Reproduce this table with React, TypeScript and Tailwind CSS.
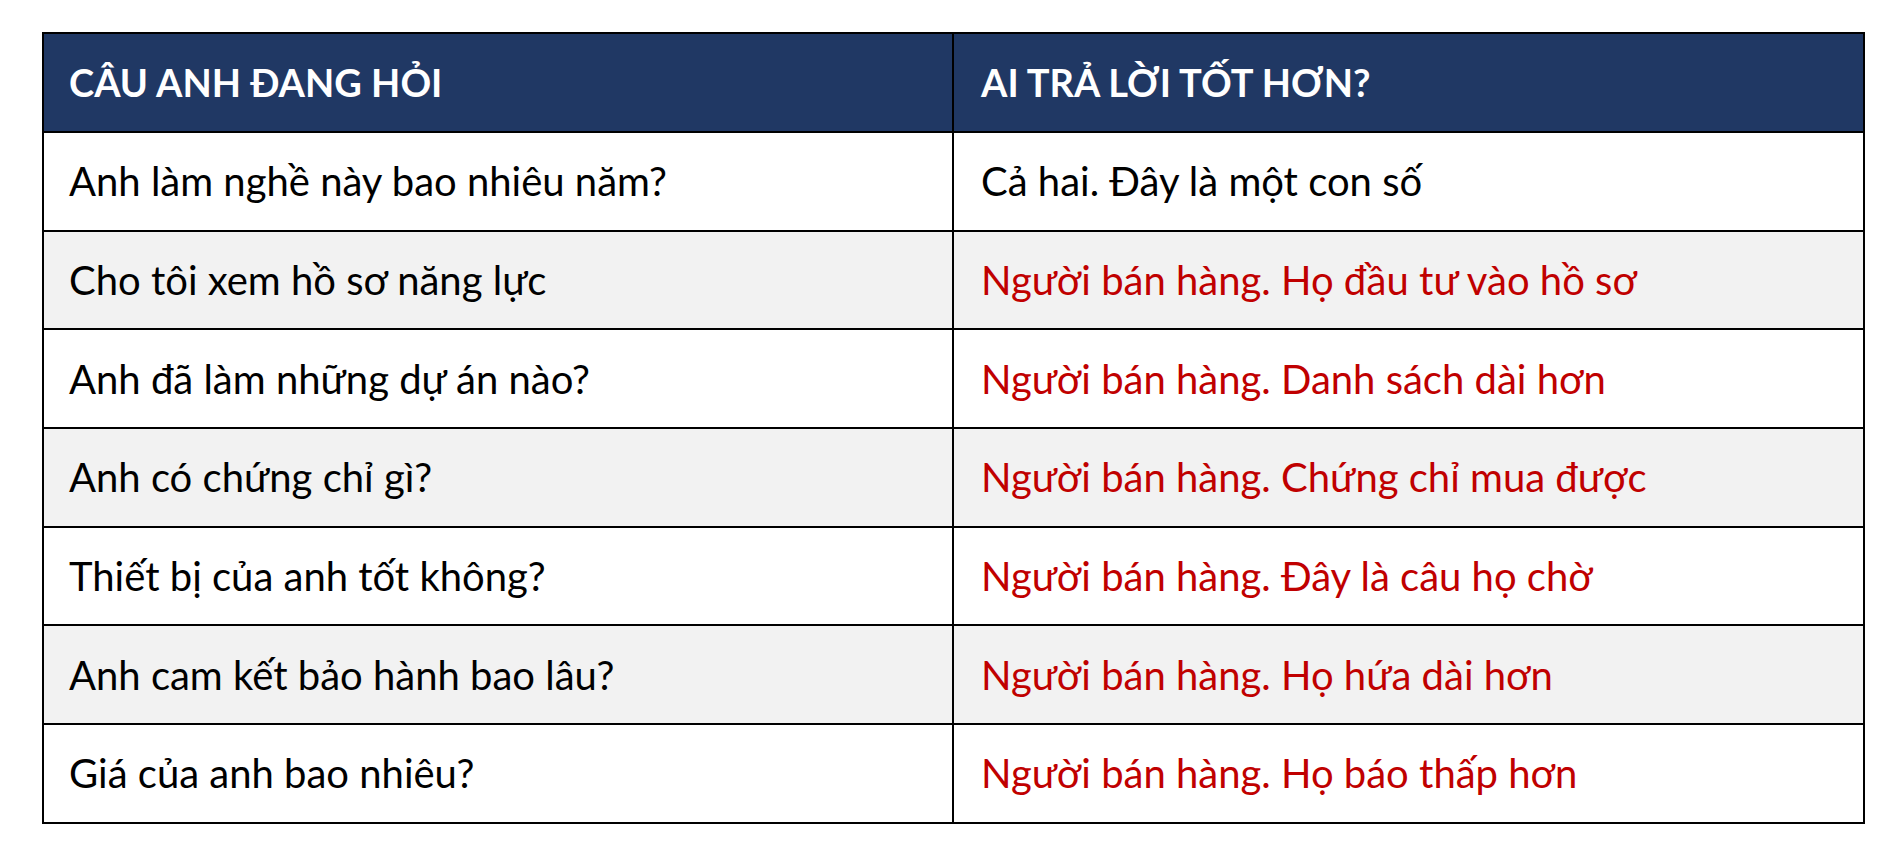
import React from "react";

const rows: { q: string; a: string; red: boolean }[] = [
  { q: "Anh làm nghề này bao nhiêu năm?", a: "Cả hai. Đây là một con số", red: false },
  { q: "Cho tôi xem hồ sơ năng lực", a: "Người bán hàng. Họ đầu tư vào hồ sơ", red: true },
  { q: "Anh đã làm những dự án nào?", a: "Người bán hàng. Danh sách dài hơn", red: true },
  { q: "Anh có chứng chỉ gì?", a: "Người bán hàng. Chứng chỉ mua được", red: true },
  { q: "Thiết bị của anh tốt không?", a: "Người bán hàng. Đây là câu họ chờ", red: true },
  { q: "Anh cam kết bảo hành bao lâu?", a: "Người bán hàng. Họ hứa dài hơn", red: true },
  { q: "Giá của anh bao nhiêu?", a: "Người bán hàng. Họ báo thấp hơn", red: true },
];

export default function App() {
  return (
    <div
      className="min-h-[855px] w-full bg-white pl-[42px] pt-[32px]"
      style={{ fontFamily: "Lato, 'Noto Sans', sans-serif" }}
    >
      <div className="w-[1823px] border-2 border-black">
        <div className="flex h-[97px] bg-[#203864] text-white">
          <div className="flex w-[910px] items-center border-r-2 border-black pl-[25px] text-[38px] font-bold">
            CÂU ANH ĐANG HỎI
          </div>
          <div className="flex flex-1 items-center pl-[27px] text-[38px] font-bold">
            AI TRẢ LỜI TỐT HƠN?
          </div>
        </div>
        {rows.map((r, i) => (
          <div
            key={i}
            className={`flex h-[98.7px] border-t-2 border-black ${i % 2 === 1 ? "bg-[#f2f2f2]" : "bg-white"}`}
          >
            <div className="flex w-[910px] items-center border-r-2 border-black pl-[25px] text-[40px] text-black">
              {r.q}
            </div>
            <div
              className={`flex flex-1 items-center pl-[27px] text-[40px] ${r.red ? "text-[#c00000]" : "text-black"}`}
            >
              {r.a}
            </div>
          </div>
        ))}
      </div>
    </div>
  );
}
